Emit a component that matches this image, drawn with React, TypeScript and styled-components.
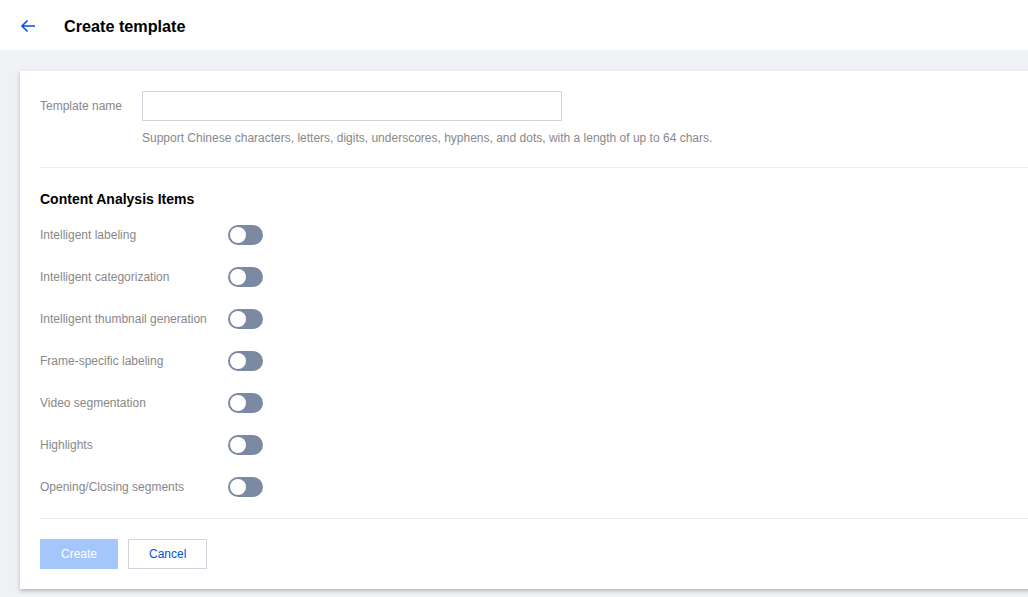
import React, { useState } from "react";
import styled, { createGlobalStyle } from "styled-components";

const GlobalStyle = createGlobalStyle`
  html, body {
    margin: 0;
    padding: 0;
    background: #f0f1f5;
    font-family: "Liberation Sans", Arial, Helvetica, sans-serif;
    overflow: hidden;
  }
`;

const Page = styled.div`
  width: 1028px;
  height: 597px;
  background: #f0f1f5;
  overflow: hidden;
`;

const Header = styled.header`
  height: 50px;
  background: #fff;
  display: flex;
  align-items: center;
  padding: 2px 0 0 19px;
  box-sizing: border-box;
`;

const BackButton = styled.button`
  border: none;
  background: none;
  padding: 0;
  width: 18px;
  height: 18px;
  display: flex;
  align-items: center;
  justify-content: center;
  cursor: pointer;
  color: #0052d9;
`;

const Title = styled.h1`
  margin: 0 0 0 27px;
  font-size: 16.2px;
  font-weight: 700;
  color: #000;
`;

const Body = styled.main`
  padding: 21px 0 0 20px;
`;

const Card = styled.section`
  width: 1040px;
  background: #fff;
  box-shadow: 0 2px 4px rgba(54, 58, 80, 0.32);
  padding: 20px 0 20px 20px;
  box-sizing: border-box;
`;

const FieldRow = styled.div`
  display: flex;
  align-items: flex-start;
`;

const Label = styled.label`
  width: 102px;
  flex-shrink: 0;
  font-size: 12px;
  color: #888;
  line-height: 30px;
`;

const FieldBody = styled.div`
  display: flex;
  flex-direction: column;
`;

const Input = styled.input`
  width: 420px;
  height: 30px;
  box-sizing: border-box;
  border: 1px solid #cfd5de;
  outline: none;
  padding: 0 8px;
  font-size: 12px;
  font-family: inherit;
`;

const Help = styled.p`
  margin: 8px 0 0;
  font-size: 12px;
  line-height: 18px;
  color: #888;
`;

const Divider = styled.hr<{ $top: number; $bottom: number }>`
  border: none;
  border-top: 1px solid #e7eaef;
  margin: ${(p) => `${p.$top}px 0 ${p.$bottom}px`};
`;

const SectionTitle = styled.h2`
  margin: 0 0 15px;
  font-size: 14px;
  line-height: 22px;
  font-weight: 700;
  color: #000;
`;

const ItemList = styled.div`
  display: flex;
  flex-direction: column;
  gap: 22px;
`;

const ItemRow = styled.div`
  display: flex;
  align-items: center;
  height: 20px;
`;

const ItemLabel = styled.span`
  width: 188px;
  font-size: 12px;
  color: #888;
`;

const Switch = styled.button<{ $on: boolean }>`
  position: relative;
  width: 35px;
  height: 20px;
  border: none;
  border-radius: 10px;
  padding: 0;
  cursor: pointer;
  background: ${(p) => (p.$on ? "#0052d9" : "#7b89a3")};

  &::after {
    content: "";
    position: absolute;
    top: 2px;
    left: ${(p) => (p.$on ? "17px" : "2px")};
    width: 16px;
    height: 16px;
    border-radius: 50%;
    background: #fff;
    transition: left 0.15s;
  }
`;

const Actions = styled.div`
  display: flex;
  gap: 10px;
`;

const Button = styled.button<{ $primary?: boolean }>`
  height: 30px;
  min-width: 78px;
  padding: 0 20px;
  font-size: 12px;
  font-family: inherit;
  box-sizing: border-box;
  cursor: pointer;
  border: 1px solid ${(p) => (p.$primary ? "#a4c6fa" : "#cfd5de")};
  background: ${(p) => (p.$primary ? "#a4c6fa" : "#fff")};
  color: ${(p) => (p.$primary ? "#fff" : "#0052d9")};
`;

const items = [
  "Intelligent labeling",
  "Intelligent categorization",
  "Intelligent thumbnail generation",
  "Frame-specific labeling",
  "Video segmentation",
  "Highlights",
  "Opening/Closing segments",
];

export default function App() {
  const [on, setOn] = useState<boolean[]>(items.map(() => false));
  return (
    <Page>
      <GlobalStyle />
      <Header>
        <BackButton aria-label="Back">
          <svg width="16" height="14" viewBox="0 0 16 14" fill="none">
            <path d="M15 7H2M7.5 1.5 2 7l5.5 5.5" stroke="currentColor" strokeWidth="1.6" />
          </svg>
        </BackButton>
        <Title>Create template</Title>
      </Header>
      <Body>
        <Card>
          <FieldRow>
            <Label>Template name</Label>
            <FieldBody>
              <Input />
              <Help>
                Support Chinese characters, letters, digits, underscores, hyphens, and dots, with a length of up to 64 chars.
              </Help>
            </FieldBody>
          </FieldRow>
          <Divider $top={20} $bottom={20} />
          <SectionTitle>Content Analysis Items</SectionTitle>
          <ItemList>
            {items.map((item, i) => (
              <ItemRow key={item}>
                <ItemLabel>{item}</ItemLabel>
                <Switch
                  $on={on[i]}
                  onClick={() => setOn(on.map((v, j) => (j === i ? !v : v)))}
                />
              </ItemRow>
            ))}
          </ItemList>
          <Divider $top={21} $bottom={20} />
          <Actions>
            <Button $primary>Create</Button>
            <Button>Cancel</Button>
          </Actions>
        </Card>
      </Body>
    </Page>
  );
}
